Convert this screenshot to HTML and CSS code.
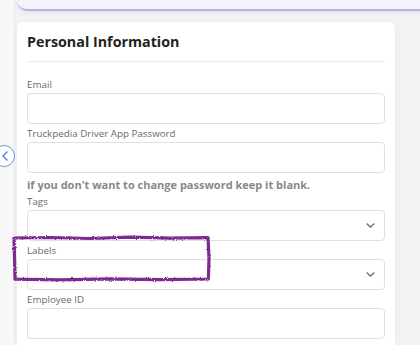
FILE: index.html
```html
<!DOCTYPE html>
<html lang="en">
<head>
    <meta charset="UTF-8">
    <meta name="viewport" content="width=device-width, initial-scale=1.0">
    <title>Driver Profile</title>
    <link rel="stylesheet" href="styles.css">
</head>
<body>
    <div class="page">
        <div class="top-bar"></div>

        <div class="card">
            <h2>Personal Information</h2>
            <div class="divider"></div>

            <div class="fields">
                <div class="field">
                    <label>Email</label>
                    <div class="input"></div>
                </div>

                <div class="field">
                    <label>Truckpedia Driver App Password</label>
                    <div class="input"></div>
                </div>

                <p class="hint">if you don't want to change password keep it blank.</p>

                <div class="field">
                    <label>Tags</label>
                    <div class="input select">
                        <svg class="chevron" width="9" height="5" viewBox="0 0 9 5"><path d="M1 0.8l3.5 3.4 3.5-3.4" fill="none" stroke="#6a6a6a" stroke-width="1.2" stroke-linecap="round" stroke-linejoin="round"/></svg>
                    </div>
                </div>

                <div class="field">
                    <label>Labels</label>
                    <div class="input select">
                        <svg class="chevron" width="9" height="5" viewBox="0 0 9 5"><path d="M1 0.8l3.5 3.4 3.5-3.4" fill="none" stroke="#6a6a6a" stroke-width="1.2" stroke-linecap="round" stroke-linejoin="round"/></svg>
                    </div>
                </div>

                <div class="field">
                    <label>Employee ID</label>
                    <div class="input"></div>
                </div>
            </div>
        </div>

        <!-- collapse sidebar toggle -->
        <div class="toggle">
            <svg width="8" height="10" viewBox="0 0 8 10"><path d="M6 1L2 5l4 4" fill="none" stroke="#5f8ad8" stroke-width="1.6" stroke-linecap="round" stroke-linejoin="round"/></svg>
        </div>

        <!-- hand drawn highlight -->
        <svg class="marker" width="204" height="50" viewBox="0 0 204 50">
            <defs>
                <filter id="rough" x="-5%" y="-20%" width="110%" height="140%">
                    <feTurbulence type="fractalNoise" baseFrequency="0.9" numOctaves="2" seed="3"/>
                    <feDisplacementMap in="SourceGraphic" scale="2.6"/>
                </filter>
            </defs>
            <path filter="url(#rough)" d="M4 4 L40 3.5 L80 4.5 L120 3.2 L160 4.2 L198 3.6 L199 24 L198.4 45 L150 45.6 L100 44.8 L50 45.8 L5 45.2 L4.6 26 Z" fill="none" stroke="#7b2a8f" stroke-width="3.2" stroke-linejoin="round"/>
        </svg>
    </div>
</body>
</html>
```

FILE: styles.css
```css
* {
    margin: 0;
    padding: 0;
    box-sizing: border-box;
    font-family: 'Open Sans', 'Liberation Sans', sans-serif;
}

body {
    background: #f3f3f5;
    overflow: hidden;
}

.page {
    position: relative;
    width: 420px;
    height: 345px;
    padding-left: 17px;
    background: linear-gradient(to right, #f8f8f9 0, #f8f8f9 14px, #ececee 14px, #ececee 15px, #f3f3f5 15px);
}

.top-bar {
    height: 11px;
    margin-right: -20px;
    background: #f4f3fd;
    border-bottom: 2px solid #b8b2e4;
    border-bottom-left-radius: 10px;
    box-shadow: 0 2px 4px rgba(120, 110, 200, 0.12);
}

.card {
    width: 378px;
    margin-top: 11px;
    padding: 11px 10px 8px 10px;
    background: white;
    border-radius: 6px 6px 0 0;
    box-shadow: 0 1px 6px rgba(0,0,0,0.05);
}

h2 {
    font-size: 14.3px;
    font-weight: 700;
    color: #222;
    line-height: 18px;
}

.divider {
    height: 1px;
    background: #ececec;
    margin-top: 10px;
    margin-bottom: 17px;
}

.fields {
    display: flex;
    flex-direction: column;
    gap: 4px;
}

.field {
    display: flex;
    flex-direction: column;
}

label {
    font-size: 9.8px;
    line-height: 12px;
    color: #6a6a6a;
    margin-bottom: 2px;
}

.input {
    height: 31px;
    border: 1px solid #e0e0e0;
    border-radius: 4px;
    background: white;
}

.select {
    display: flex;
    align-items: center;
    justify-content: flex-end;
    padding-right: 9px;
}

.hint {
    margin-top: 1px;
    font-size: 11px;
    line-height: 14px;
    font-weight: 700;
    color: #888;
}

.toggle {
    position: absolute;
    left: -7px;
    top: 145px;
    width: 22px;
    height: 22px;
    border: 1.5px solid #6f97dd;
    border-radius: 50%;
    background: white;
    display: flex;
    align-items: center;
    justify-content: flex-end;
    padding-right: 5px;
}

.marker {
    position: absolute;
    left: 10px;
    top: 234px;
}
```
